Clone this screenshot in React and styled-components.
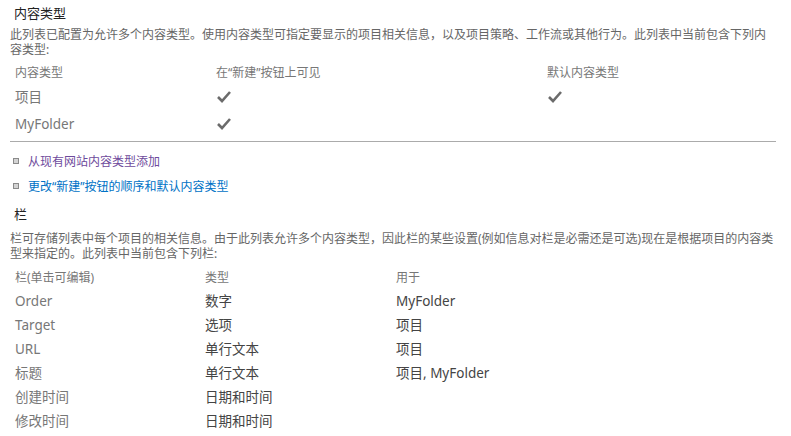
import React from 'react'
import styled, { createGlobalStyle } from 'styled-components'

const GlobalStyle = createGlobalStyle`
  body {
    margin: 0;
    background: #fff;
    font-family: "Noto Sans", "Noto Sans CJK SC", sans-serif;
  }
`

const Page = styled.div`
  padding: 4px 15px 0 10px;
`

const SectionTitle = styled.div`
  font-size: 13px;
  line-height: 18px;
  color: #222;
  padding-left: 4px;
  margin-top: ${p => p.$top || 0}px;
`

const Description = styled.div`
  font-size: 12px;
  line-height: 15px;
  color: #666;
  margin-top: ${p => p.$top || 5}px;
  white-space: nowrap;
`

const Grid = styled.div`
  display: grid;
  grid-template-columns: ${p => p.$cols};
  margin-top: 5px;
  padding-left: 5px;
`

const HeadCell = styled.div`
  font-size: 12px;
  line-height: 16px;
  color: #777;
  height: ${p => p.$h}px;
  display: flex;
  align-items: center;
`

const Cell = styled.div`
  font-size: 13.5px;
  line-height: 18px;
  color: ${p => (p.$muted ? '#777' : '#444')};
  height: ${p => p.$h}px;
  display: flex;
  align-items: center;
`

const Rule = styled.hr`
  border: 0;
  border-top: 1px solid #ababab;
  margin: 4px 0 0 0;
`

const LinkList = styled.ul`
  list-style: none;
  margin: 6px 0 0 0;
  padding: 0;
`

const LinkItem = styled.li`
  display: flex;
  align-items: center;
  height: 25px;
  padding-left: 3px;
  &::before {
    content: '';
    width: 4px;
    height: 4px;
    border: 1px solid #8a8a8a;
    background: #d4d4d4;
    margin-right: 9px;
  }
`

const Link = styled.a`
  font-size: 12px;
  text-decoration: none;
  color: ${p => (p.$visited ? '#6e4a9c' : '#0072c6')};
  cursor: pointer;
`

const Check = () => (
  <svg width="16" height="14" viewBox="0 0 16 14">
    <polyline points="2,7 6,11 14,2" fill="none" stroke="#6b6b6b" strokeWidth="2.6" />
  </svg>
)

const contentTypes = [
  { name: '项目', visible: true, def: true },
  { name: 'MyFolder', visible: true, def: false },
]

const columns = [
  ['Order', '数字', 'MyFolder'],
  ['Target', '选项', '项目'],
  ['URL', '单行文本', '项目'],
  ['标题', '单行文本', '项目, MyFolder'],
  ['创建时间', '日期和时间', ''],
  ['修改时间', '日期和时间', ''],
]

export default function App() {
  return (
    <Page>
      <GlobalStyle />
      <SectionTitle>内容类型</SectionTitle>
      <Description>
        此列表已配置为允许多个内容类型。使用内容类型可指定要显示的项目相关信息，以及项目策略、工作流或其他行为。此列表中当前包含下列内
        <br />
        容类型:
      </Description>
      <Grid $cols="201px 331px 1fr">
        <HeadCell $h={21}>内容类型</HeadCell>
        <HeadCell $h={21}>在“新建”按钮上可见</HeadCell>
        <HeadCell $h={21}>默认内容类型</HeadCell>
        {contentTypes.map(t => (
          <React.Fragment key={t.name}>
            <Cell $h={27} $muted>{t.name}</Cell>
            <Cell $h={27}>{t.visible && <Check />}</Cell>
            <Cell $h={27}>{t.def && <Check />}</Cell>
          </React.Fragment>
        ))}
      </Grid>
      <Rule />
      <LinkList>
        <LinkItem><Link $visited>从现有网站内容类型添加</Link></LinkItem>
        <LinkItem><Link>更改“新建”按钮的顺序和默认内容类型</Link></LinkItem>
      </LinkList>
      <SectionTitle $top={7}>栏</SectionTitle>
      <Description $top={8}>
        栏可存储列表中每个项目的相关信息。由于此列表允许多个内容类型，因此栏的某些设置(例如信息对栏是必需还是可选)现在是根据项目的内容类
        <br />
        型来指定的。此列表中当前包含下列栏:
      </Description>
      <Grid $cols="190px 191px 1fr">
        <HeadCell $h={23}>栏(单击可编辑)</HeadCell>
        <HeadCell $h={23}>类型</HeadCell>
        <HeadCell $h={23}>用于</HeadCell>
        {columns.map(([name, type, used]) => (
          <React.Fragment key={name}>
            <Cell $h={24} $muted>{name}</Cell>
            <Cell $h={24}>{type}</Cell>
            <Cell $h={24}>{used}</Cell>
          </React.Fragment>
        ))}
      </Grid>
    </Page>
  )
}
